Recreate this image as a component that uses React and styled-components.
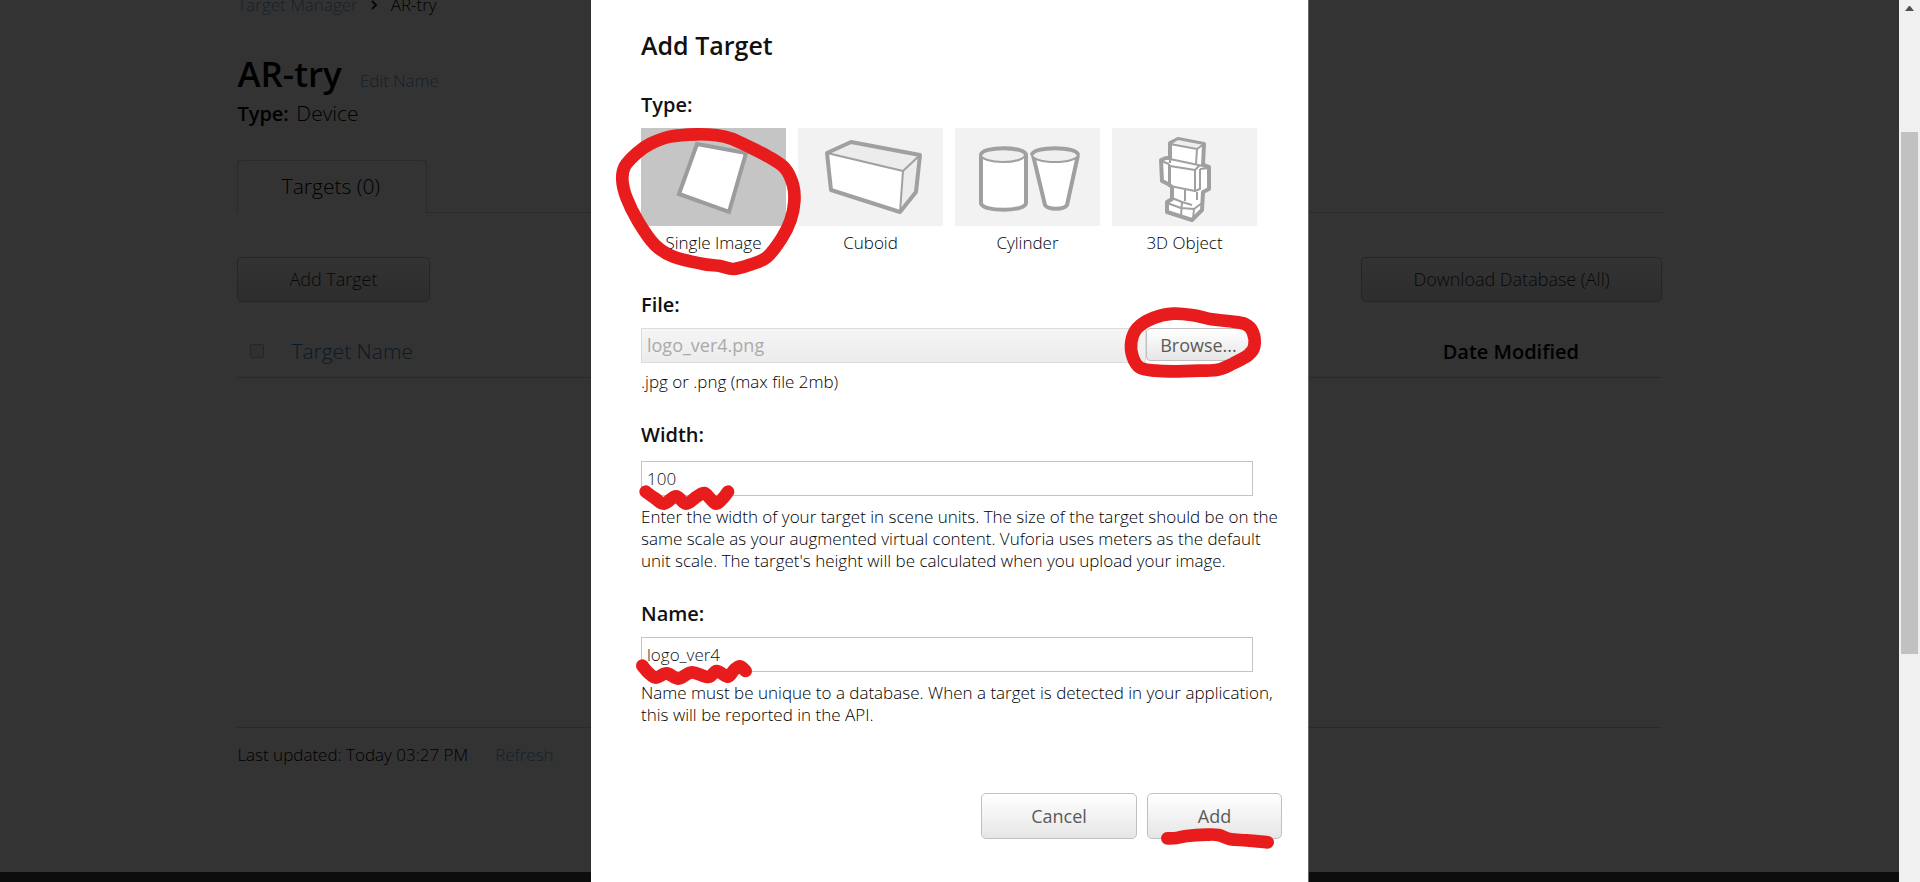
import React from "react";
import styled, { createGlobalStyle } from "styled-components";

const GlobalStyle = createGlobalStyle`
  *, *::before, *::after { box-sizing: border-box; }
  html, body { margin: 0; }
  body {
    overflow: hidden;
    background: #333333;
    font-family: "Open Sans", "Noto Sans", sans-serif;
    font-weight: 300;
    color: #000000;
  }
  button, input { font-family: inherit; font-weight: inherit; }
`;

const Window = styled.div`
  display: flex;
  height: 100vh;
  overflow: hidden;
`;

const Stage = styled.div`
  flex: 1;
  display: grid;
  grid-template: minmax(100%, auto) / minmax(0, 1fr);
  overflow: hidden;

  & > * { grid-area: 1 / 1; }
`;

/* Dimmed page behind the dialog */

const Page = styled.div`
  display: flex;
  flex-direction: column;
`;

const Container = styled.main`
  width: 75%;
  min-height: 879px;
  margin: -7px auto 0;
`;

const Breadcrumb = styled.nav`
  display: flex;
  align-items: center;
  gap: 13px;
  font-size: 17px;
  line-height: 24px;
`;

const DimLink = styled.a`
  color: ${(p) => (p.$strong ? "#0c1824" : "#15202b")};
  font-size: ${(p) => (p.$strong ? 21 : 17)}px;
  font-weight: 300;
  text-decoration: none;
`;

const TitleRow = styled.div`
  display: flex;
  align-items: baseline;
  gap: 18px;
  margin-top: 33px;
`;

const PageTitle = styled.h1`
  margin: 0;
  font-size: 35px;
  line-height: 48px;
  font-weight: 600;
`;

const TypeLine = styled.p`
  margin: 0;
  font-size: 21px;
  line-height: 30px;

  b { margin-right: 2px; font-size: 20px; font-weight: 600; }
`;

const Tabs = styled.div`
  display: flex;
  margin-top: 31px;

  &::after {
    content: "";
    flex: 1;
    border-bottom: 1px solid #2a2a2a;
  }
`;

const Tab = styled.button`
  width: 190px;
  height: 53px;
  padding: 0 3px 2px 0;
  border: 1px solid #2a2a2a;
  border-bottom: 0;
  border-radius: 4px 4px 0 0;
  background: transparent;
  color: #000000;
  font-size: 21px;
`;

const Toolbar = styled.div`
  display: flex;
  justify-content: space-between;
  margin-top: 44px;
`;

const DimButton = styled.button`
  height: 45px;
  padding: 0 51px 1px;
  border: 1px solid #262626;
  border-radius: 5px;
  background: linear-gradient(#333333, #2d2d2d);
  color: #080808;
  font-size: 18px;
`;

const TableArea = styled.div`
  min-height: 425px;
  padding-top: 24px;
`;

const Table = styled.table`
  width: 100%;
  border-collapse: collapse;
  border-bottom: 1px solid #292929;

  th {
    height: 51px;
    padding: 0;
    text-align: left;
    font-size: 20px;
    font-weight: 600;
  }
  th:first-child { width: 54px; padding-left: 13px; }
  th:last-child { width: 219px; }
`;

const DimCheckbox = styled.input`
  display: block;
  appearance: none;
  width: 14px;
  height: 14px;
  margin: 0;
  border: 1px solid #252525;
  border-radius: 2px;
  background: #303030;
`;

const UpdateRow = styled.div`
  display: flex;
  gap: 27px;
  padding-top: 15px;
  border-top: 1px solid #292929;
  font-size: 17px;
  line-height: 24px;
`;

const Footer = styled.footer`
  flex: 1;
  min-height: 10px;
  background: #0b0e0d;
`;

/* Dialog */

const Dialog = styled.form`
  justify-self: center;
  width: 718px;
  max-width: 100%;
  margin-left: 1px;
  padding: 27px 26px 44px 50px;
  border-right: 1px solid #666666;
  background: #ffffff;
`;

const DialogTitle = styled.h2`
  margin: 0 0 30px;
  color: #111111;
  font-size: 25px;
  line-height: 36px;
  font-weight: 600;
`;

const Field = styled.div`
  margin-bottom: 30px;
`;

const FieldLabel = styled.label`
  display: block;
  margin-bottom: ${(p) => p.$space || 12}px;
  color: #111111;
  font-size: 20px;
  line-height: 23px;
  font-weight: 600;
`;

const Help = styled.p`
  margin: ${(p) => p.$space || 10}px 0 0;
  color: #000000;
  font-size: 17px;
  line-height: 22px;
`;

const Tiles = styled.div`
  display: flex;
  gap: 12px;
  margin-bottom: 39px;
`;

const TileLabel = styled.label`
  position: relative;
  width: 145px;
  color: #000000;
  font-size: 17px;
  line-height: 22px;
  text-align: center;

  input {
    position: absolute;
    opacity: 0;
  }
`;

const TileArt = styled.svg`
  display: block;
  width: 100%;
  height: 98px;
  margin-bottom: 6px;
  background: #f2f2f2;

  input:checked + & { background: #c5c5c5; }
`;

const InputRow = styled.div`
  position: relative;
  display: flex;
  width: 612px;
  max-width: 100%;
`;

const TextInput = styled.input`
  flex: 1;
  min-width: 0;
  height: 35px;
  padding: 0 5px 1px;
  border: 1px solid #c4c4c4;
  border-radius: 0;
  background: #ffffff;
  color: #111111;
  font-size: 17px;
  outline: none;

  &:read-only {
    border-color: #dcdcdc;
    background: linear-gradient(#f5f5f5, #ececec);
    color: #aaaaaa;
    font-size: 18px;
    font-weight: 400;
  }
`;

const Button = styled.button`
  position: relative;
  width: ${(p) => p.$width}px;
  height: ${(p) => (p.$small ? 33 : 46)}px;
  padding: 0 ${(p) => (p.$small ? 2 : 0)}px 0 0;
  border: 1px solid #c0c0c0;
  border-radius: ${(p) => (p.$small ? 4 : 5)}px;
  background: linear-gradient(#ffffff, #e6e6e6);
  color: #5a5a5a;
  font-size: 18px;
  font-weight: 400;
`;

const BrowseSlot = styled.div`
  width: 107px;
  height: 35px;
`;

const Actions = styled.div`
  display: flex;
  justify-content: flex-end;
  gap: 10px;
  margin-top: 67px;
`;

/* Hand-drawn red marks that lie over the controls */

const MarkSvg = styled.svg`
  position: absolute;
  left: ${(p) => p.$x}px;
  top: ${(p) => p.$y}px;
  z-index: 2;
  overflow: visible;
  pointer-events: none;
  fill: none;
  stroke: #e81c1c;
  stroke-linecap: round;
  stroke-linejoin: round;
`;

function smoothPath(points, closed) {
  const n = points.length;
  const at = (i) =>
    closed ? points[(i + n) % n] : points[Math.max(0, Math.min(n - 1, i))];
  let d = `M${points[0]}`;
  for (let i = 0; i < (closed ? n : n - 1); i++) {
    const [a, b, c, e] = [at(i - 1), at(i), at(i + 1), at(i + 2)];
    d += `C${b[0] + (c[0] - a[0]) / 6},${b[1] + (c[1] - a[1]) / 6} ${
      c[0] - (e[0] - b[0]) / 6
    },${c[1] - (e[1] - b[1]) / 6} ${c}`;
  }
  return d;
}

function Mark({ points, closed, x, y, width, height }) {
  return (
    <MarkSvg
      $x={x}
      $y={y}
      width={width}
      height={height}
      viewBox={`0 0 ${width * 3} ${height * 3}`}
      strokeWidth="38"
      aria-hidden="true"
    >
      <path d={smoothPath(points, closed)} />
    </MarkSvg>
  );
}

const tileRing = [
  [67, 270], [75, 228], [112, 188], [150, 162], [210, 140], [290, 133],
  [350, 136], [395, 146], [440, 167], [505, 200], [555, 235], [579, 285],
  [583, 335], [572, 390], [545, 445], [500, 502], [450, 524], [400, 537],
  [360, 528], [305, 521], [220, 500], [165, 465], [115, 395], [80, 325],
];
const browseRing = [
  [394, 155], [398, 200], [420, 233], [465, 242], [525, 244], [600, 242],
  [655, 239], [700, 220], [745, 195], [763, 168], [758, 125], [735, 102],
  [690, 94], [635, 88], [580, 76], [520, 71], [460, 84], [412, 114],
];
const widthWave = [
  [137, 635], [165, 655], [192, 671], [228, 649], [258, 671], [290, 650],
  [313, 639], [330, 655], [348, 671], [366, 658], [384, 635],
];
const nameWave = [
  [127, 257], [145, 278], [168, 293], [200, 280], [236, 296], [275, 277],
  [325, 291], [350, 273], [383, 290], [402, 270], [420, 259], [437, 273],
];
const addStroke = [
  [622, 205], [650, 204], [680, 198], [740, 194], [775, 195], [812, 208],
  [860, 211], [923, 217],
];

/* Tile drawings */

function SingleArt() {
  return (
    <path
      d="M56 16 105 25 88 84 38 66Z"
      fill="#fff"
      stroke="#9c9c9c"
      strokeWidth="4"
    />
  );
}

function CuboidArt() {
  return (
    <g stroke="#a0a0a0" strokeLinejoin="round">
      <path d="M29 25 53 14 122 27 118 64 102 84 33 62Z" fill="#ececec" />
      <path d="M29 25 105 43 102 84 33 62Z" fill="#fff" strokeWidth="2" />
      <path d="M105 43 122 27" strokeWidth="2" />
      <path
        d="M29 25 53 14 122 27 118 64 102 84 33 62Z"
        fill="none"
        strokeWidth="4"
      />
    </g>
  );
}

function CylinderArt() {
  return (
    <g stroke="#a0a0a0" strokeWidth="4" strokeLinejoin="round">
      <path d="M26 27V75C26 84 71 84 71 75V27" fill="#fff" />
      <ellipse cx="48" cy="27" rx="22" ry="7" fill="#efefef" strokeWidth="2" />
      <path d="M26 27C26 18 71 18 71 27" fill="none" />
      <path d="M78 27 90 77C93 82 109 82 112 77L123 27" fill="#fff" />
      <ellipse cx="100" cy="27" rx="23" ry="7" fill="#efefef" strokeWidth="2" />
      <path d="M77 27C77 18 123 18 123 27" fill="none" />
    </g>
  );
}

function RobotArt() {
  return (
    <g stroke="#a0a0a0" strokeLinejoin="round">
      <path
        d="M58 15 66 11 92 16 91 37 97 39 97 61 91 64 90 82 80 92 55 84 55 74 60 71 60 59 56 56 50 53 49 32 54 30 58 30Z"
        fill="#fff"
        strokeWidth="4"
      />
      <path d="M58 16 85 21 92 16 66 11Z" fill="#eee" strokeWidth="2" />
      <path
        d="M85 21 84 36M58 31 91 38M58 31V35M49 33 57 36M57 36V58M58 38 83 42V63L58 58ZM83 42 88 37M88 41 88 61 83 63M88 41 97 40M60 59V70L70 74 80 77M73 62V73M60 71 55 75 69 80 82 81M70 74 69 88M82 81 81 91M82 81 90 75M85 64V72"
        fill="none"
        strokeWidth="2"
      />
    </g>
  );
}

const targetTypes = [
  { name: "Single Image", Art: SingleArt },
  { name: "Cuboid", Art: CuboidArt },
  { name: "Cylinder", Art: CylinderArt },
  { name: "3D Object", Art: RobotArt },
];

/* Window scroll bar */

const ScrollTrack = styled.div`
  display: flex;
  flex-direction: column;
  width: 21px;
  padding: 0 2px;
  background: #f0f0f0;

  svg { display: block; height: 20px; }
  &::after { content: ""; flex: 228; }
`;

const ScrollGap = styled.div`
  flex: 112;
`;

const ScrollThumb = styled.div`
  flex: 522;
  background: #c1c1c1;
`;

export default function App() {
  return (
    <Window>
      <GlobalStyle />
      <Stage>
        <Page>
          <Container>
            <Breadcrumb>
              <DimLink href="#manager">Target Manager</DimLink>
              <svg width="7" height="12" viewBox="0 0 7 12" aria-hidden="true">
                <path d="M1 2 5 6 1 10" fill="none" stroke="#080808" strokeWidth="2" />
              </svg>
              <span>AR-try</span>
            </Breadcrumb>
            <TitleRow>
              <PageTitle>AR-try</PageTitle>
              <DimLink href="#edit">Edit Name</DimLink>
            </TitleRow>
            <TypeLine>
              <b>Type:</b> Device
            </TypeLine>
            <Tabs>
              <Tab type="button">Targets (0)</Tab>
            </Tabs>
            <Toolbar>
              <DimButton type="button">Add Target</DimButton>
              <DimButton type="button">Download Database (All)</DimButton>
            </Toolbar>
            <TableArea>
              <Table>
                <thead>
                  <tr>
                    <th>
                      <DimCheckbox type="checkbox" aria-label="Select all targets" />
                    </th>
                    <th>
                      <DimLink href="#name" $strong>
                        Target Name
                      </DimLink>
                    </th>
                    <th>Date Modified</th>
                  </tr>
                </thead>
              </Table>
            </TableArea>
            <UpdateRow>
              <span>Last updated: Today 03:27 PM</span>
              <DimLink href="#refresh">Refresh</DimLink>
            </UpdateRow>
          </Container>
          <Footer />
        </Page>

        <Dialog role="dialog" aria-labelledby="dialog-title">
          <DialogTitle id="dialog-title">Add Target</DialogTitle>

          <FieldLabel as="div" id="type-label">
            Type:
          </FieldLabel>
          <Tiles role="radiogroup" aria-labelledby="type-label">
            {targetTypes.map(({ name, Art }, i) => (
              <TileLabel key={name}>
                <input type="radio" name="type" defaultChecked={i === 0} />
                <TileArt viewBox="0 0 145 98" aria-hidden="true">
                  <Art />
                </TileArt>
                {name}
                {i === 0 && (
                  <Mark points={tileRing} closed x={-41} y={-38} width={210} height={190} />
                )}
              </TileLabel>
            ))}
          </Tiles>

          <Field>
            <FieldLabel htmlFor="file">File:</FieldLabel>
            <InputRow>
              <TextInput id="file" readOnly defaultValue="logo_ver4.png" />
              <BrowseSlot>
                <Button type="button" $small $width={107}>
                  Browse...
                </Button>
              </BrowseSlot>
              <Mark points={browseRing} closed x={359} y={-38} width={270} height={100} />
            </InputRow>
            <Help $space={8}>.jpg or .png (max file 2mb)</Help>
          </Field>

          <Field>
            <FieldLabel htmlFor="width" $space={15}>
              Width:
            </FieldLabel>
            <InputRow>
              <TextInput id="width" defaultValue="100" />
              <Mark points={widthWave} x={-41} y={-181} width={150} height={240} />
            </InputRow>
            <Help>
              Enter the width of your target in scene units. The size of the
              target should be on the same scale as your augmented virtual
              content. Vuforia uses meters as the default unit scale. The
              target's height will be calculated when you upload your image.
            </Help>
          </Field>

          <Field>
            <FieldLabel htmlFor="name">Name:</FieldLabel>
            <InputRow>
              <TextInput id="name" defaultValue="logo_ver4" />
              <Mark points={nameWave} x={-41} y={-57} width={160} height={110} />
            </InputRow>
            <Help>
              Name must be unique to a database. When a target is detected in
              your application, this will be reported in the API.
            </Help>
          </Field>

          <Actions>
            <Button type="button" $width={156}>
              Cancel
            </Button>
            <Button type="submit" $width={135}>
              Add
              <Mark points={addStroke} x={-188} y={-24} width={320} height={90} />
            </Button>
          </Actions>
        </Dialog>
      </Stage>
      <ScrollTrack aria-hidden="true">
        <svg viewBox="0 0 17 20">
          <path d="M4 11 8 6H9L13 11Z" fill="#505050" />
        </svg>
        <ScrollGap />
        <ScrollThumb />
      </ScrollTrack>
    </Window>
  );
}
